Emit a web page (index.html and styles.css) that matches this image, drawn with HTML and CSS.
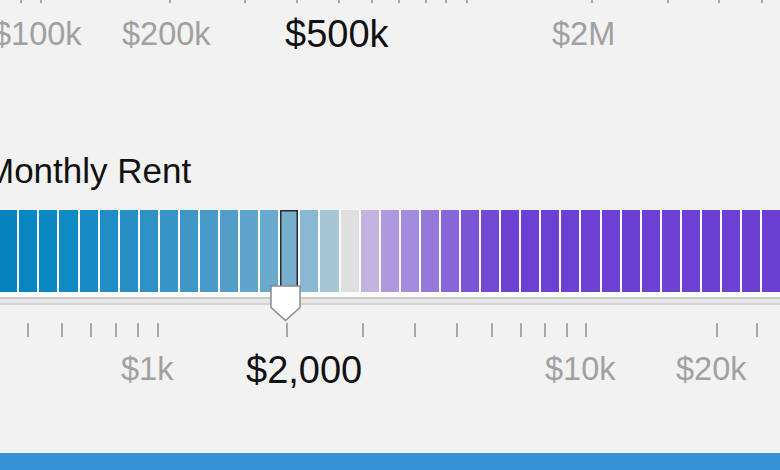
FILE: index.html
```html
<!DOCTYPE html>
<html lang="en">
<head>
    <meta charset="UTF-8">
    <meta name="viewport" content="width=device-width, initial-scale=1.0">
    <title>Monthly Rent</title>
    <link rel="stylesheet" href="styles.css">
</head>
<body>
    <div class="page">
        <div class="axis axis-top" id="axis-price">
            <span class="axis-label" style="left: -7px">$100k</span>
            <span class="axis-label" style="left: 122px">$200k</span>
            <span class="axis-label active" style="left: 285px">$500k</span>
            <span class="axis-label" style="left: 552px">$2M</span>
        </div>

        <div class="rent-section">
            <h2 class="slider-title">Monthly Rent</h2>
            <div class="slider">
                <div class="bar" id="rent-bar"></div>
                <div class="track"></div>
                <svg class="handle" width="31" height="37" viewBox="0 0 31 37">
                    <polygon points="1,1 30,1 30,22.5 15.5,35.5 1,22.5" fill="#fff" stroke="#8a8a8a" stroke-width="1.5"/>
                </svg>
            </div>
            <div class="axis axis-bottom" id="axis-rent">
                <span class="axis-label" style="left: 121px">$1k</span>
                <span class="axis-label active" style="left: 246px">$2,000</span>
                <span class="axis-label" style="left: 545px">$10k</span>
                <span class="axis-label" style="left: 676px">$20k</span>
            </div>
        </div>

        <div class="footer-bar"></div>
    </div>

    <script>
    // colour of each step of the rent scale, cheapest on the left
    var cores = [
        "#0683bf", "#0886c1", "#0b88c2", "#1189c3", "#188bc4", "#208dc5", "#278fc5",
        "#2f92c6", "#3795c7", "#3f97c8", "#489bc9", "#529ec9", "#5ea4cb", "#68a9cd",
        "#78afcd", "#89b8d2", "#a6c6d6", "#dfdfdf", "#c2b3e0", "#ae98de", "#a38bde",
        "#9478da", "#8767d8", "#7a55d6", "#7248d4", "#6d42d3", "#6c40d3", "#6c40d2",
        "#6c40d2", "#6c40d3", "#6c40d2", "#6b3fd2", "#6c40d2", "#6c40d3", "#6c40d2",
        "#6b3fd2", "#6c40d2", "#6b3fd2", "#6b3fd2"
    ];
    var selecionado = 14;

    var topTicks = [20, 40, 169, 244, 296, 338, 371, 398, 425, 445, 466, 591, 667, 718, 761];
    var bottomTicks = [27, 61, 90, 115, 137, 157, 286, 362, 414, 456, 491, 520, 544, 566, 585, 716, 756];

    function montarBarra() {
        var barra = document.getElementById("rent-bar");
        cores.forEach(function(cor, i) {
            var cell = document.createElement("div");
            cell.className = i === selecionado ? "cell selected" : "cell";
            cell.style.backgroundColor = cor;
            barra.appendChild(cell);
        });
    }

    function montarTicks(id, posicoes) {
        var eixo = document.getElementById(id);
        posicoes.forEach(function(x) {
            var tick = document.createElement("div");
            tick.className = "tick";
            tick.style.left = x + "px";
            eixo.appendChild(tick);
        });
    }

    montarBarra();
    montarTicks("axis-price", topTicks);
    montarTicks("axis-rent", bottomTicks);
    </script>
</body>
</html>
```

FILE: styles.css
```css
* {
    margin: 0;
    padding: 0;
    box-sizing: border-box;
}

body {
    font-family: "Liberation Sans", Arial, sans-serif;
    background-color: #f2f2f2;
    width: 780px;
    height: 470px;
    overflow: hidden;
}

.page {
    display: flex;
    flex-direction: column;
    height: 470px;
}

.axis {
    position: relative;
}

.axis-top {
    height: 60px;
}

.axis-bottom {
    height: 147px;
}

.tick {
    position: absolute;
    width: 1.5px;
    background-color: #a9a9a9;
}

.axis-top .tick {
    top: 0;
    height: 3px;
}

.axis-bottom .tick {
    top: 18px;
    height: 14px;
}

.axis-label {
    position: absolute;
    font-size: 32.5px;
    line-height: 40px;
    color: #a0a0a0;
    white-space: nowrap;
}

.axis-top .axis-label {
    top: 14px;
}

.axis-bottom .axis-label {
    top: 44px;
}

.axis-label.active {
    font-size: 38px;
    color: #111;
}

.axis-top .axis-label.active {
    top: 14px;
}

.axis-bottom .axis-label.active {
    top: 45px;
}

.rent-section {
    margin-top: 91px;
}

.slider-title {
    font-size: 35px;
    font-weight: normal;
    line-height: 40px;
    color: #111;
    margin-left: -15px;
    margin-bottom: 19px;
}

.slider {
    position: relative;
    background-color: #fbfbfb;
}

.bar {
    display: flex;
    gap: 2px;
    height: 82px;
    margin-left: -0.8px;
}

.cell {
    flex: 0 0 18.09px;
}

.cell.selected {
    box-shadow: inset 0 0 0 1.5px #2b2b2b;
}

.track {
    height: 8px;
    margin-top: 5px;
    background-color: #e7e7e7;
    border-top: 2px solid #c9c9c9;
    border-bottom: 2px solid #d3d3d3;
}

.handle {
    position: absolute;
    left: 270px;
    top: 75px;
}

.footer-bar {
    flex: 1;
    background-color: #3592d6;
    border-top: 1px solid #fafafa;
}
```
